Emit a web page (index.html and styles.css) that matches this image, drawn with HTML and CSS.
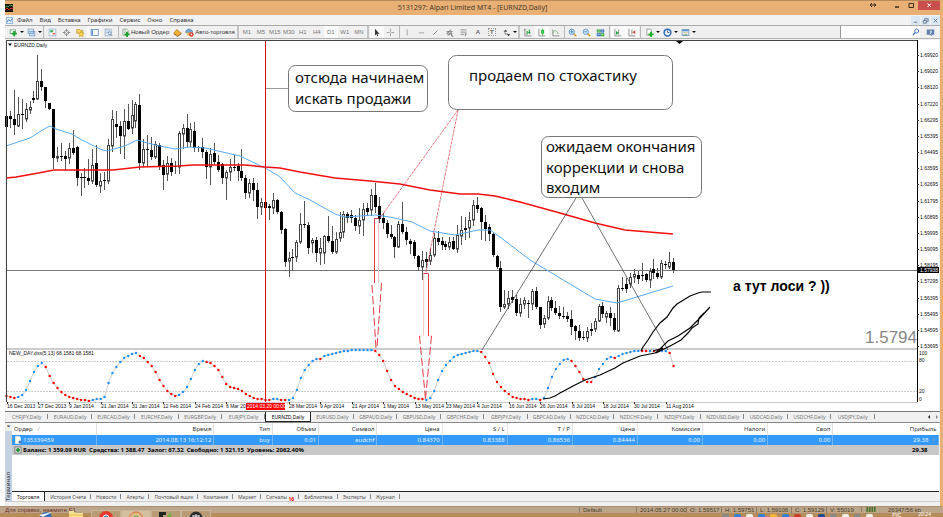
FILE: index.html
```html
<!DOCTYPE html>
<html lang="ru">
<head>
<meta charset="utf-8">
<title>5131297: Alpari Limited MT4 - [EURNZD,Daily]</title>
<link rel="stylesheet" href="styles.css">
</head>
<body>
<div class="window">
  <header class="titlebar">
    <svg class="app-icon" viewBox="0 0 8 8"><rect width="8" height="8" fill="#1c1608"/><path d="M0 3l2-1 1 1 2-2 3 1" stroke="#3fa43a" fill="none"/><path d="M0 6l2-2 2 2 2-2 2 1" stroke="#d8321c" fill="none"/></svg>
    <h1>5131297: Alpari Limited MT4 - [EURNZD,Daily]</h1>
    <div class="window-buttons">
      <button class="pin" aria-label="Переключить"><svg viewBox="0 0 8 8"><path d="M1 4h6M3 2L1 4l2 2M5 2.500l2 1.500-2 1.500" stroke="#3a2a18" fill="none"/></svg></button>
      <button aria-label="Свернуть"><svg viewBox="0 0 8 8"><path d="M2 6h4" stroke="#3a2a18" stroke-width="1.500"/></svg></button>
      <button aria-label="Развернуть"><svg viewBox="0 0 8 8"><path d="M2 2.500h4.500v4H2z" stroke="#3a2a18" fill="none"/></svg></button>
      <button class="close" aria-label="Закрыть"><svg viewBox="0 0 8 8"><path d="M2.500 2.500l3.500 3.500M6 2.500L2.500 6" stroke="#fff"/></svg></button>
    </div>
  </header>
  <nav class="menubar">
    <svg class="doc-icon" viewBox="0 0 8 8"><rect x=".5" y=".5" width="7" height="7" fill="#e4effa" stroke="#8db2d8"/><path d="M1 6l2-3 2 2 2-3" stroke="#3d78b8" fill="none"/></svg>
    <button>Файл</button><button>Вид</button><button>Вставка</button><button>Графики</button><button>Сервис</button><button>Окно</button><button>Справка</button>
    <div class="mdi">
      <button aria-label="Свернуть окно"><svg viewBox="0 0 8 8"><path d="M2 6h4" stroke="#5a7288"/></svg></button>
      <button aria-label="Восстановить окно"><svg viewBox="0 0 8 8"><path d="M3 4V2h4v3H5M1.500 4H5v3H1.500z" stroke="#5a7288" fill="none"/></svg></button>
      <button aria-label="Закрыть окно"><svg viewBox="0 0 8 8"><path d="M2 2l4 4M6 2L2 6" stroke="#5a7288"/></svg></button>
    </div>
  </nav>
  <div class="toolbar">
    <div class="group">
      <button class="drop" aria-label="Новый график"><svg viewBox="0 0 12 12"><rect x="1.500" y="2.500" width="7" height="5" fill="#fff" stroke="#679b71"/><path d="M7 4v7M3.500 7.500h7" stroke="#18a028" stroke-width="2.500"/></svg></button>
      <button class="drop" aria-label="Профили"><svg viewBox="0 0 12 12"><rect x="3.500" y="4.500" width="7" height="6" fill="#cfe0f2" stroke="#6c94c0"/><rect x="1.500" y="1.500" width="7" height="6" fill="#e6f0fa" stroke="#6c94c0"/><path d="M2 5h6" stroke="#7fa9d4" stroke-width="2"/></svg></button>
    </div>
    <div class="group lined">
      <button aria-label="Обзор рынка"><svg viewBox="0 0 12 12"><rect x="1.500" y="1.500" width="9" height="9" fill="#fff" stroke="#8aaed4"/><path d="M3 4h4M4 3v3" stroke="#28a040" stroke-width="2"/><path d="M6 7.500h3.500" stroke="#e25440" stroke-width="2"/></svg></button>
      <button aria-label="Окно данных"><svg viewBox="0 0 12 12"><circle cx="6" cy="6" r="3" fill="none" stroke="#888"/><path d="M6 1v4M6 7v4M1 6h4M7 6h4" stroke="#777"/></svg></button>
      <button aria-label="Навигатор"><svg viewBox="0 0 12 12"><path d="M1 2h4l1 1h3v4H1z" fill="#f3d36c" stroke="#c29a2c"/><path d="M7 4l1 2.500 3 .500-2 2 .500 2.500-2.500-1-2.500 1 .500-2.500-2-2 3-.500z" fill="#ffd84b" stroke="#b98a1e" stroke-width=".7"/></svg></button>
      <button class="on" aria-label="Терминал"><svg viewBox="0 0 12 12"><rect x="1.500" y="2" width="9.500" height="8" fill="#fff" stroke="#4c82bd"/><path d="M3 3v6" stroke="#5b93cf" stroke-width="2"/></svg></button>
      <button aria-label="Тестер"><svg viewBox="0 0 12 12"><rect x="1.500" y="1.500" width="8" height="9" fill="#edf3fa" stroke="#8ba5c2"/><path d="M3 4h5M3 6h3" stroke="#90b4d8"/><circle cx="7.500" cy="7" r="2" fill="#d8e8f6" stroke="#6c87a2"/><path d="M9 8.500l2 2" stroke="#7c7c7c"/></svg></button>
    </div>
    <div class="group lined wide">
      <button class="text"><svg viewBox="0 0 12 12"><path d="M2.500 1.500h5l2 2v6h-7z" fill="#fff" stroke="#77917c"/><path d="M4 4h3M4 6h2" stroke="#999"/><path d="M8 5v7M4.500 8.500h7" stroke="#18a028" stroke-width="2.500"/></svg>Новый Ордер</button>
      <button aria-label="Редактор"><svg viewBox="0 0 12 12"><path d="M1 7l4-5 6 5-5 3.500z" fill="#f2b33a" stroke="#b27c16"/><path d="M1 8l5 3 5-3" stroke="#8f6414" fill="none"/></svg></button>
      <button class="text"><svg viewBox="0 0 12 12"><path d="M1 6c0-6 9-6 9 0z" fill="#77a8d8" stroke="#48769f"/><path d="M2 6h8l-1 4H3z" fill="#f2c45d"/><circle cx="8.500" cy="8.500" r="3" fill="#db3b28"/><path d="M7.500 7.500h2v2h-2z" fill="#fff"/></svg>Авто-торговля</button>
    </div>
    <div class="group handle periods">
      <button>M1</button><button>M5</button><button>M15</button><button>M30</button><button>H1</button><button>H4</button><button class="on">D1</button><button>W1</button><button>MN</button>
    </div>
    <div class="group handle">
      <button class="on" aria-label="Курсор"><svg viewBox="0 0 12 12"><path d="M4 1v9l2-2 1.500 3 1-.500L7 7.500h3z" fill="#333"/></svg></button>
      <button aria-label="Перекрестие"><svg viewBox="0 0 12 12"><path d="M6 1v4M6 7v4M1 6h4M7 6h4" stroke="#888"/></svg></button>
    </div>
    <div class="group lined">
      <button aria-label="Вертикальная линия"><svg viewBox="0 0 12 12"><path d="M5.500 2v8" stroke="#888"/></svg></button>
      <button aria-label="Горизонтальная линия"><svg viewBox="0 0 12 12"><path d="M2.500 6.500h7" stroke="#888"/></svg></button>
      <button aria-label="Трендовая линия"><svg viewBox="0 0 12 12"><path d="M3 9l6-6" stroke="#777"/></svg></button>
      <button aria-label="Канал"><svg viewBox="0 0 12 12"><path d="M2 8l6-6M4 10l6-6M2 5h7M3 8h6M9 7v4h2" stroke="#555" fill="none"/></svg></button>
      <button aria-label="Фибоначчи"><svg viewBox="0 0 12 12"><path d="M2 2.500h8M2 5.500h8M2 8.500h5M8.500 7v4M8.500 8h2" stroke="#777" fill="none"/></svg></button>
      <button class="glyph">A</button>
      <button class="glyph"><span class="boxed">T</span></button>
      <button class="drop" aria-label="Стрелки"><svg viewBox="0 0 12 12"><path d="M2 5l3-3 2 3zM6 8h5l-2 3z" fill="#444"/><path d="M4 5v3h4" stroke="#666" fill="none"/></svg></button>
    </div>
    <div class="group handle">
      <button aria-label="Бары"><svg viewBox="0 0 12 12"><path d="M2.500 1v9.500H11M1 3l1.500-1.500L4 3" stroke="#777" fill="none"/><path d="M5.500 4v5M8.500 2v6M7 6h3" stroke="#22a035" stroke-width="1.500"/></svg></button>
      <button class="on" aria-label="Свечи"><svg viewBox="0 0 12 12"><path d="M2.500 1v9.500H11" stroke="#777" fill="none"/><path d="M7.500 1v9" stroke="#22a035"/><rect x="5.500" y="2.500" width="4" height="5" fill="#2cc445"/></svg></button>
      <button aria-label="Линия"><svg viewBox="0 0 12 12"><path d="M2.500 2v8.500H11" stroke="#777" fill="none"/><path d="M2 7c3-5 4-5 8 1" stroke="#4fae5f" fill="none"/></svg></button>
    </div>
    <div class="group lined">
      <button aria-label="Увеличить"><svg viewBox="0 0 12 12"><path d="M7.500 7.500l3.500 3.500" stroke="#d3a02c" stroke-width="2"/><circle cx="5" cy="5" r="3.500" fill="#d9ecfb" stroke="#3b7fc2"/><path d="M3 5h4M5 3v4" stroke="#2f6fb0"/></svg></button>
      <button aria-label="Уменьшить"><svg viewBox="0 0 12 12"><path d="M7.500 7.500l3.500 3.500" stroke="#d3a02c" stroke-width="2"/><circle cx="5" cy="5" r="3.500" fill="#d9ecfb" stroke="#3b7fc2"/><path d="M3 5h4" stroke="#2f6fb0"/></svg></button>
      <button aria-label="Мозаика"><svg viewBox="0 0 12 12"><path d="M1 2h5v4H1zM6 7h5v4H6z" fill="#2ba135"/><path d="M6 2h5v4H6zM1 7h5v4H1z" fill="#2767b8"/><path d="M2 4h3M7 4h3M2 9h3M7 9h3" stroke="#fff"/></svg></button>
    </div>
    <div class="group lined">
      <button class="on" aria-label="Автопрокрутка"><svg viewBox="0 0 12 12"><path d="M2.500 1v9.500H11M7.500 2v7" stroke="#777" fill="none"/><path d="M4 4l4 2.500L4 9z" fill="#24a83a"/></svg></button>
      <button class="on" aria-label="Сдвиг графика"><svg viewBox="0 0 12 12"><path d="M2.500 1v9.500H11M6.500 2v7" stroke="#777" fill="none"/><path d="M11 3v5L7 5.500z" fill="#c94f38"/></svg></button>
    </div>
    <div class="group lined">
      <button class="drop" aria-label="Индикаторы"><svg viewBox="0 0 12 12"><path d="M2.500 1.500h5l1 1v7h-6z" fill="#fff" stroke="#888"/><path d="M8 5v7M4.500 8.500h7" stroke="#18b028" stroke-width="2.500"/></svg></button>
      <button class="drop" aria-label="Периоды"><svg viewBox="0 0 12 12"><circle cx="6" cy="6" r="4.500" fill="#eaf4fd" stroke="#2e6db2" stroke-width="2"/><path d="M6 3v3h2.500" stroke="#345" fill="none"/></svg></button>
      <button class="drop" aria-label="Шаблоны"><svg viewBox="0 0 12 12"><rect x="1.500" y="2" width="9" height="8" fill="#fff" stroke="#5a86b5"/><path d="M2 3.500h8" stroke="#5a94cf" stroke-width="2"/><path d="M3 7l2-1 2 1 2-1" stroke="#b85" fill="none"/><path d="M3 9h6" stroke="#4a9f55"/></svg></button>
    </div>
    <div class="search">
      <input type="text" aria-label="Поиск">
      <svg viewBox="0 0 12 12"><circle cx="7" cy="4.500" r="3" fill="none" stroke="#4a7ad0" stroke-width="1.500"/><path d="M5 6.500L1.500 10.500" stroke="#4a7ad0" stroke-width="2"/></svg>
    </div>
    <button class="chat" aria-label="Сообщения"><svg viewBox="0 0 12 12"><path d="M1 2h10v7H7l2 2.500L5 9H1z" fill="#5f7fae"/><path d="M5 4h2v2H6v2" stroke="#fff" fill="none"/></svg></button>
  </div>

  <main class="chart">
    <svg id="chart" viewBox="5 39 935 372" role="img" aria-label="EURNZD,Daily">
      <rect x="6" y="40" width="933" height="371" fill="#fff"/>
      <g id="levels"></g>
      <path class="price-line" d="M7 270.500H917"/>
      <g id="candles"></g>
      <path class="ma-fast" d="M6 146L30 138 44 129 50 126 56 129 72 134 80 139 100 149 107 151 125 146 137 140 155 145 175 149 190 147 205 148 240 156 265 168 279 176 295 193 310 200 335 214 345 217 375 215 390 217 412 222 430 231 455 235 478 230 490 230 500 237 530 260 560 278 595 299 617 303 640 296 673 286"/>
      <path class="ma-slow" d="M6 178L16 177 33 174 54 170 113 170 140 167 178 166 193 165 245 165 265 167 280 168 300 172 335 178 370 181 400 184 430 190 460 194 478 194 495 196 520 202 560 213 595 223 625 230 673 234"/>
      <path class="split" d="M6 349H918"/>
      <g id="stochastic"></g>
      <path class="cursor-line" d="M265.500 41V402"/>

      <g class="callouts">
        <path class="stem" d="M266 88.500H288"/>
        <rect x="288.500" y="65.500" width="139" height="46" rx="7"/>
        <rect x="448.500" y="55.500" width="224" height="54" rx="8"/>
        <rect x="541.500" y="136.500" width="160" height="61" rx="7"/>
      </g>
      <g class="note">
        <text x="295" y="83">отсюда начинаем</text><text x="295" y="104">искать продажи</text>
        <text x="469" y="81">продаем по стохастику</text>
        <text x="546" y="152">ожидаем окончания</text><text x="546" y="173">коррекции и снова</text><text x="546" y="193">входим</text>
      </g>
      <g class="sell-marks">
        <path class="thin" d="M458 110L380 218M458 110L426 272"/>
        <path d="M374.500 283V218.500H378.500M428.500 336V273.500H423.500"/>
        <path class="faint" d="M378.500 219V283M423.500 274V336M419 336h3M429 336h3"/>
        <path class="dashes" d="M372 285L376 348M381.500 283L377 348M419.500 336L425.500 399M431.500 336L425.500 399"/>
      </g>
      <path class="pointer" d="M576 198L482 350M582 198L668 350"/>
      <path class="scribble" d="M641 351L643 347 648 340 653 332 660 323 667 317 673 308 677 304 690 296 698 293 702 292 711 292M653 351L660 349 668 341 678 336 690 328 698 320 710 307M656 353L664 349 672 345 681 340 688 333 692 328 698 324 699 318 704 313M543 399L550 398 555 396 560 393 575 385 585 380 600 375 615 368 623 363 640 356 655 353 663 348"/>
      <text class="remark" x="733" y="291">а тут лоси ? ))</text>
      <text class="quote" x="865" y="343">1.5794</text>

      <path class="frame" d="M6 40.500H918M6.500 40V402"/>
      <path class="axis" d="M917.500 40V402"/>
      <path class="base" d="M7 402.500H917"/>
      <path d="M676 41h7l-3.500 3z"/>
      <path d="M8 43.500h4l-2 2.500z"/>
      <g class="small"><text x="14" y="47">EURNZD,Daily</text><text x="9" y="355">NEW_DAY.dss(5,13) 68.1581 68.1581</text></g>
      <g class="small" id="axes"></g>
      <rect x="918" y="267" width="21" height="6"/>
      <rect class="date-tag" x="246" y="403" width="39" height="7"/>
      <g class="small tag"><text x="920" y="272">1.57938</text><text x="247" y="408">2014.03.20 00:00</text></g>
    </svg>
  </main>

  <nav class="chart-tabs">
    <div class="tab-list">
      <button>CHFJPY,Daily</button><button>EURAUD,Daily</button><button>EURCAD,Daily</button><button>EURCHF,Daily</button><button>EURGBP,Daily</button><button>EURJPY,Daily</button><button class="active">EURNZD,Daily</button><button>EURUSD,Daily</button><button>GBPAUD,Daily</button><button>GBPUSD,Daily</button><button>GBPCHF,Daily</button><button>GBPJPY,Daily</button><button>GBPCAD,Daily</button><button>NZDCAD,Daily</button><button>NZDCHF,Daily</button><button>NZDJPY,Daily</button><button>NZDUSD,Daily</button><button>USDCAD,Daily</button><button>USDCHF,Daily</button><button>USDJPY,Daily</button>
    </div>
    <svg class="scroll" viewBox="0 0 12 6"><path d="M3 1v4L1 3z" fill="#222"/><path d="M9 1v4l2-2z" fill="#888"/></svg>
  </nav>

  <section class="terminal">
    <div class="side"><button aria-label="Закрыть терминал">×</button><span>Терминал</span></div>
    <div class="panel">
      <table>
        <colgroup><col class="c-order"><col class="c-time"><col class="c-type"><col class="c-vol"><col class="c-sym"><col class="c-num"><col class="c-num"><col class="c-num"><col class="c-num"><col class="c-num"><col class="c-num"><col class="c-num"><col class="c-profit"></colgroup>
        <thead><tr><th>Ордер &nbsp; <i>/</i></th><th>Время</th><th>Тип</th><th>Объем</th><th>Символ</th><th>Цена</th><th>S / L</th><th>T / P</th><th>Цена</th><th>Комиссия</th><th>Налоги</th><th>Своп</th><th>Прибыль</th></tr></thead>
        <tbody>
          <tr class="order"><td><svg viewBox="0 0 8 8"><path d="M1.500.500h4l1 1.500v5.500h-5z" fill="#fff" stroke="#d6e4f0"/><circle cx="6" cy="6" r="1.500" fill="#4577a8"/></svg>135339459</td><td>2014.08.13 16:12:12</td><td>buy</td><td>0.01</td><td>audchf</td><td>0.84370</td><td>0.83388</td><td>0.86536</td><td>0.84444</td><td>0.00</td><td>0.00</td><td>0.00</td><td>29.38 &nbsp;<i>×</i></td></tr>
          <tr class="balance"><td colspan="12"><svg viewBox="0 0 8 8"><rect x="1" y="1" width="6" height="6" fill="#fff" stroke="#777"/><circle cx="4" cy="4" r="2" fill="#259035"/></svg>Баланс: 1 359.09 RUR&nbsp; Средства: 1 388.47&nbsp; Залог: 67.32&nbsp; Свободно: 1 321.15&nbsp; Уровень: 2062.40%</td><td>29.38</td></tr>
        </tbody>
      </table>
      <nav class="term-tabs">
        <button class="active">Торговля</button><button>История Счета</button><button>Новости</button><button>Алерты</button><button>Почтовый ящик</button><button>Компания</button><button>Маркет</button><button>Сигналы <sub>16</sub></button><button>Библиотека</button><button>Эксперты</button><button>Журнал</button>
      </nav>
    </div>
  </section>

  <div class="status">
    <span class="help">Для справки, нажмите F1</span>
    <span class="profile">Default</span><span class="date">2014.05.27 00:00</span><span>O: 1.59517</span><span>H: 1.59751</span><span>L: 1.59106</span><span>C: 1.59129</span><span>V: 55019</span>
    <span class="net"><svg viewBox="0 0 12 6"><path d="M1.500 0v6M4.500 0v6M7.500 0v6M10.500 0v6" stroke="#49702a" stroke-width="2"/></svg></span><span class="traffic">26347/56 kb</span>
  </div>
</div>

<footer class="taskbar">
  <button aria-label="Калькулятор"><svg viewBox="0 0 16 12"><path d="M2 1h5v5H2zM8 1h5v5H8zM2 7h11v5H2z" fill="#f5f1e8"/></svg></button>
  <button aria-label="Обозреватель"><svg viewBox="0 0 16 12"><circle cx="8" cy="8" r="6" fill="#2c70b8"/><path d="M1 5l13-3-9 5z" fill="#eef4fa"/></svg></button>
  <button aria-label="Проводник"><svg viewBox="0 0 16 12"><path d="M1 1h5l1 2h8v9H1z" fill="#f6df8e"/><path d="M1 5h14" stroke="#e2bd58"/></svg></button>
  <button class="open" aria-label="Chrome"><svg viewBox="0 0 16 12"><circle cx="8" cy="7" r="7" fill="#e33b2e"/><path d="M1 7a7 7 0 0 0 5 5l1-4z" fill="#2fa34c"/><path d="M15 7a7 7 0 0 1-5 5V6z" fill="#f5cf37"/><circle cx="8" cy="7" r="3" fill="#3e7fd8" stroke="#fff"/></svg></button>
  <button class="open light" aria-label="Alpari"><svg viewBox="0 0 16 12"><g fill="none"><path d="M1 8a7 7 0 0 1 14 0" stroke="#e2683c"/><path d="M3 8a5 5 0 0 1 10 0" stroke="#e8bd46"/><path d="M5 8a3 3 0 0 1 6 0" stroke="#6aa45d"/></g></svg></button>
  <button class="open" aria-label="Терминал FX"><svg viewBox="0 0 16 12"><path d="M1 1h7v3H5v2h3v3H5v3H1z" fill="#1f2620"/><path d="M14 0L8 7l3 1-2 4 6-6-3-1z" fill="#57b536"/></svg></button>
  <button class="open" aria-label="Приложение"><svg viewBox="0 0 16 12"><circle cx="8" cy="7" r="6.500" fill="#2b2b2b"/><path d="M5 4v8M11 4v8M5 5h6M8 3v9" stroke="#eee" fill="none"/></svg></button>
  <div class="tray">
    <i class="grey"></i><i class="blue"></i><i class="white"></i><i class="blue"></i><i class="gold"></i><i class="blue"></i><i class="red"></i><i class="white"></i><i class="navy"></i><i class="grey"></i><i class="white"></i><i class="grey"></i><i class="white"></i>
    <span>РУС</span>
  </div>
  <time>20:24</time>
</footer>
<script src="chart.js"></script>
</body>
</html>
```
FILE: styles.css
```css
* { box-sizing: border-box; }
body {
  margin: 0;
  height: 100vh;
  overflow: hidden;
  display: flex;
  flex-direction: column;
  background: #b58c5a;
  font: 6px/8px "Noto Sans", sans-serif;
  color: #333;
}
button {
  border: 0;
  padding: 0;
  margin: 0;
  background: none;
  font: inherit;
  color: inherit;
  white-space: nowrap;
}
svg { display: block; }

.window {
  flex: 1;
  min-height: 0;
  display: flex;
  flex-direction: column;
  border-left: 5px solid #fff;
  border-right: 3px solid #e8b075;
  background: #f0f0f0;
}

/* title and menu */
.titlebar {
  height: 15px;
  flex: none;
  display: grid;
  grid-template-columns: 1fr auto 1fr;
  border-top: 1px solid #b98a5a;
  background: #e8b075;
}
.app-icon { width: 8px; height: 8px; margin-top: 3px; }
.titlebar h1 { margin: 0; font-size: 7px; font-weight: 400; line-height: 14px; color: #4b3a28; }
.window-buttons { display: flex; justify-content: flex-end; }
.window-buttons button { width: 14px; height: 9px; display: flex; justify-content: center; }
.window-buttons svg { width: 8px; height: 8px; }
.window-buttons .pin { margin-right: 10px; }
.window-buttons .close { width: 22px; background: #c9504f; }
.menubar { height: 10px; flex: none; display: flex; align-items: center; gap: 7px; background: #f2f2f2; }
.doc-icon { width: 7px; height: 7px; margin: 0 -3px 0 1px; }
.mdi { margin-left: auto; display: flex; gap: 1px; }
.mdi button { width: 9px; height: 9px; background: #dbe8f4; }
.mdi svg { width: 7px; height: 7px; margin: auto; }

/* toolbar */
.toolbar {
  height: 14px;
  flex: none;
  display: flex;
  align-items: stretch;
  border-top: 1px solid #aaa;
  border-bottom: 1px solid #b4b4b4;
  background: #f0f0f0;
  font-family: "Liberation Sans", sans-serif;
}
.group { display: flex; padding: 0 1px; }
.group button { width: 14px; display: flex; align-items: center; justify-content: center; }
.group svg { width: 9px; height: 9px; flex: none; }
.lined { border-left: 1px solid #b8b8b8; }
.handle { border-left: 2px solid #c4c4c4; }
.group .on { background: #fafafa; }
.group .drop { width: 18px; justify-content: flex-start; padding-left: 3px; gap: 2px; }
.drop::after { content: ""; border: 2px solid transparent; border-top-color: #111; border-bottom: 0; }
.wide { margin-left: 2px; }
.group .text { width: auto; gap: 1px; padding: 0 1px; }
.periods { color: #777; }
.glyph { font-weight: 700; color: #666; }
.boxed { border: 1px dotted #999; line-height: 6px; padding: 0 1px; }
.search { margin-left: auto; width: 80px; display: flex; align-items: center; background: #fff; border-left: 1px solid #999; }
.search input { flex: 1; min-width: 0; height: 10px; padding: 0 2px; border: 0; background: none; font: inherit; outline: 0; }
.search svg { width: 8px; height: 8px; }
.chat { width: 20px; }
.chat svg { width: 9px; height: 9px; margin: 0 6px; }

/* chart */
.chart { flex: none; }
.chart svg { width: 100%; height: auto; }
.frame, .axis { fill: none; stroke: #444; }
.axis { stroke: #000; }
.base, .levels-line { stroke: #ccc; fill: none; }
.levels-line { stroke-dasharray: 2 1; }
.split { stroke: #ccc; stroke-width: 2; }
.price-line { stroke: #777; }
.wick { stroke: #555; }
.up { fill: #fff; stroke: #444; }
.ma-fast { fill: none; stroke: #5aaaf5; }
.ma-slow { fill: none; stroke: #f01010; stroke-width: 1.5; }
.cursor-line { stroke: #e01010; }
.stoch { fill: none; stroke: #ccc; }
.dot-up { fill: #1e90ff; }
.dot-down { fill: #f00; }
.callouts rect { fill: #fff; stroke: #777; }
.stem { stroke: #999; }
.note { font: 15px "Noto Sans", sans-serif; fill: #111; }
.sell-marks { fill: none; stroke: #e23a44; }
.sell-marks .thin { stroke-width: .7; stroke-dasharray: 3 1; }
.sell-marks .faint { stroke: #fbc8c8; }
.dashes { stroke-dasharray: 8 3; }
.pointer { stroke: #333; stroke-width: .7; }
.scribble { fill: none; stroke: #000; stroke-width: 1.2; }
.remark { font: bold 14px "Liberation Sans", sans-serif; }
.quote { font: 17px "Liberation Sans", sans-serif; fill: #888; }
.small { font: 5px "Liberation Sans", sans-serif; fill: #111; }
.tag { fill: #fff; }
.date-tag { fill: #f00; }
.tick { stroke: #333; }

/* chart tabs */
.chart-tabs { height: 11px; flex: none; display: flex; justify-content: space-between; border-top: 1px solid #777; color: #777; font-size: 5px; }
.tab-list { width: 93%; display: flex; }
.tab-list button { position: relative; flex: 1; }
.tab-list button::after, .term-tabs button::after {
  content: "";
  position: absolute;
  right: 0;
  top: 2px;
  height: 5px;
  border-right: 1px solid #888;
}
.tab-list .active { background: #fff; color: #000; border: solid #222; border-width: 0 1px 1px; }
.tab-list .active::after, .term-tabs .active::after { display: none; }
.scroll { width: 12px; height: 6px; margin: 2px 1px 0 0; }

/* terminal */
.terminal { height: 80px; flex: none; display: flex; border-top: 1px solid #888; border-bottom: 1px solid #ccc; }
.side { width: 7px; display: flex; flex-direction: column; justify-content: space-between; align-items: center; background: linear-gradient(#f0f0f0 8px, #c5d2e0 8px); }
.side button { line-height: 6px; font-weight: 700; }
.side span { writing-mode: vertical-rl; transform: rotate(180deg); line-height: 7px; }
.panel { flex: 1; min-width: 0; display: flex; flex-direction: column; justify-content: space-between; background: #fff; margin-right: 1px; }
table { width: 100%; table-layout: fixed; border-collapse: collapse; }
.c-order { width: 9.1%; } .c-time { width: 12.7%; } .c-type { width: 6.3%; } .c-vol { width: 5%; } .c-sym { width: 6.3%; } .c-num { width: 7.03%; }
th, td { height: 10px; padding: 0 2px; text-align: right; font-weight: 400; white-space: nowrap; border-right: 1px solid #e4e4e4; line-height: 8px; }
th { height: 12px; color: #333; }
th:first-child, td:first-child { text-align: left; }
th:last-child { border: 0; }
th i, td i { font-style: normal; color: #999; }
td svg { display: inline-block; width: 8px; height: 8px; vertical-align: top; margin-right: 1px; }
.order { background: #3399fb; color: #e5f2ff; }
.order td { border-color: #71b6fa; }
.balance { background: #c8c8c8; color: #000; }
.balance td { font-weight: 700; border: 0; }
.order td:last-child { padding-right: 3px; }
.balance td:last-child { padding-right: 11px; }
.term-tabs { height: 10px; display: flex; border-top: 1px solid #222; background: #f0f0f0; color: #555; font-size: 5px; }
.term-tabs button { position: relative; padding: 0 5px; }
.term-tabs .active { background: #fff; color: #222; border-right: 1px solid #222; }
.term-tabs sub { color: #e00; line-height: 0; font-size: 5px; font-weight: 700; }

/* status line */
.status {
  flex: 1;
  margin: 4px -3px 0 -5px;
  padding-left: 5px;
  display: flex;
  align-items: flex-start;
  background: #bba68b;
  border-top: 1px solid #a89070;
  color: #4c3c2a;
  font: 6px/6px "Liberation Sans", sans-serif;
}
.status span { flex: none; width: 35px; padding-left: 3px; border-left: 1px solid #8f7b62; white-space: nowrap; }
.status .help { flex: 1; border: 0; padding: 0; color: #70302a; }
.status .profile { width: 57px; }
.status .date { width: 50px; }
.status .net { width: 24px; }
.status .net svg { width: 12px; height: 5px; }
.status .traffic { width: 58px; border: 0; }

/* taskbar */
.taskbar { height: 4px; flex: none; display: flex; align-items: flex-start; background: #b58c5a; padding-left: 1px; font-size: 5px; line-height: 6px; }
.taskbar button { position: relative; width: 30px; height: 7px; margin-top: -3px; overflow: hidden; }
.taskbar button:first-child { z-index: -1; }
.taskbar svg { width: 16px; height: 12px; margin: 0 auto; }
.open { background: #b99c76; border: 1px solid #c9b496; border-bottom: 0; }
.taskbar .light { background: #d2bf9e; }
.tray { margin-left: auto; display: flex; gap: 5px; color: #fff; }
.tray i { width: 7px; height: 7px; border-radius: 2px; background: #888; margin-top: 1px; }
.tray .blue { background: #2f83d2; }
.tray .white { background: #eee; }
.tray .gold { background: #f2b33a; }
.tray .red { background: #c9402e; }
.tray .navy { background: #1f4c88; }
.tray span { margin: -1px 0 0 14px; }
time { position: relative; color: #fff; margin: -2px 12px 0 17px; }
```
FILE: chart.js
```js
// Each candle: high, body top, body bottom, low, in chart units; a trailing "u" marks a rising (hollow) one.
const candles = `105 116 127 129|111 116 119 127|90 119 125 134|97 114 126 126u|99 114 115 128|103 109 119 121u|101 107 110 113u|91 98 100 102|55 81 99 99u|69 81 87 90|87 87 101 107|103 103 109 109|109 109 158 168|147 156 158 161u|143 156 157 160|151 156 159 170|143 148 158 163u|130 148 153 154|146 147 178 185|173 177 178 195|168 177 178 187|159 178 181 184|149 165 181 183u|145 163 185 186|173 181 186 192u|172 180 181 189|139 145 181 183u|110 119 146 151u|111 124 127 137|121 126 136 153|109 121 136 158u|104 121 129 129|100 115 128 133u|102 104 121 127u|94 105 163 169|139 149 163 166u|135 149 150 165|137 150 157 159|141 144 157 158u|143 145 166 169|160 165 175 189|156 163 174 180u|158 163 172 175|161 166 167 173|131 133 167 173u|124 128 134 148u|114 128 142 147|123 129 142 146u|122 131 148 151|146 147 148 151|138 147 152 157|150 152 167 178|148 154 167 184u|143 153 162 163|155 162 170 171|163 164 178 183|170 172 178 199u|159 167 172 180u|155 167 168 170|163 166 171 180|149 171 178 180|175 178 193 198|179 183 193 197u|178 183 190 200|183 190 207 218|198 202 207 214u|199 202 208 210|204 206 208 219|193 200 208 213u|199 200 212 213|211 212 230 233|228 229 262 266|252 258 261 276u|249 257 258 270|240 242 257 261u|213 224 242 243u|201 224 225 227|222 225 248 253|238 240 243 252u|237 240 253 261|238 248 253 264u|235 236 253 263u|216 236 241 242|226 241 252 253|232 239 252 253u|212 232 238 241u|211 214 232 237u|212 214 218 222|210 215 218 222|215 218 226 230|208 220 226 233u|203 209 220 235u|203 208 212 215|189 195 210 215u|183 195 207 212|197 206 219 222|213 218 223 228|220 223 234 237|225 234 237 238|236 237 247 257|221 224 247 247u|202 224 232 233|227 232 240 244|239 241 244 253|240 242 256 258|255 256 267 270|251 260 267 279u|252 259 262 267|248 255 261 264u|233 238 255 256u|231 238 242 244|237 241 245 249|241 244 247 249|237 242 247 249u|237 241 249 249|225 235 249 252u|216 230 236 244u|217 228 230 239|212 220 228 237u|200 205 220 225u|197 205 209 212|207 208 222 239|215 222 229 240|224 227 234 240|233 234 255 256|255 256 267 268|261 268 307 311|290 304 307 308u|291 298 304 308u|290 297 300 302|295 299 313 315|298 304 313 316u|297 300 304 308u|300 303 304 317|289 291 304 309u|287 291 307 308|307 307 325 328|315 318 324 327u|296 301 318 319u|297 300 308 310|301 308 313 314|306 313 316 318|307 316 317 318|312 316 319 321|310 319 327 334|325 326 331 339|325 331 338 340|331 337 338 339|327 331 338 341u|323 329 331 335|318 321 329 331u|304 306 321 321u|302 306 314 317|311 313 317 322u|307 313 318 325|313 318 330 331|285 288 331 331u|277 288 289 290|278 284 289 292|273 277 284 287u|269 274 277 282u|271 275 279 283|263 275 276 280|273 274 280 281|268 271 280 287u|259 269 273 278|268 273 277 278|260 263 277 278u|261 264 265 268|252 262 267 268u|258 262 270 272`.split("|");

const oscillator = [396,397,398,397,395,390,381,372,366,363,367,376,383,388,392,395,397,398,399,400,400,401,400,399,399,397,383,373,367,362,358,356,354,353,356,358,362,366,372,380,386,391,394,396,395,392,387,379,370,364,361,362,363,366,370,377,384,387,388,389,391,394,396,398,399,399,400,400,399,399,400,400,400,398,390,378,370,365,361,359,359,356,355,354,353,352,351,351,350,350,350,350,350,350,351,355,361,371,380,386,389,392,394,396,398,399,399,400,398,391,380,371,365,361,357,355,354,353,352,351,351,352,357,363,374,382,387,391,394,397,398,399,399,400,399,399,400,398,388,377,369,364,360,359,361,366,372,379,382,382,377,369,364,359,357,358,356,354,353,352,351,351,351,351,351,351,351,351,351,353,366];
// Inclusive index ranges where the oscillator is falling.
const falling = [[0,2],[10,21],[34,43],[51,67],[70,71],[80,80],[94,106],[121,133],[136,136],[144,149],[155,155],[162,163],[165,166],[169,170]];

const NS = "http://www.w3.org/2000/svg";
const xAt = i => 6.5 + i * 3.924;
function add(parent, tag, attrs, text) {
  const el = document.createElementNS(NS, tag);
  for (const key in attrs) el.setAttribute(key, attrs[key]);
  if (text) el.textContent = text;
  document.getElementById(parent).appendChild(el);
}

candles.forEach((row, i) => {
  const up = row.endsWith("u");
  const [high, top, bottom, low] = row.replace("u", "").split(" ").map(Number);
  const x = Math.round(xAt(i) - 0.5);
  add("candles", "path", { class: "wick", d: `M${x + 0.5} ${high}V${low + 1}` });
  if (up) add("candles", "rect", { class: "up", x: x - 0.5, y: top + 0.5, width: 2, height: Math.max(bottom - top - 0.5, 1) });
  else add("candles", "rect", { x: x - 1, y: top, width: 3, height: bottom - top });
});

for (const y of [361.5, 391.5]) add("levels", "path", { class: "levels-line", d: `M7 ${y}H917` });
add("stochastic", "path", { class: "stoch", d: "M" + oscillator.map((y, i) => `${xAt(i)} ${y}`).join("L") });
oscillator.forEach((y, i) => {
  const down = falling.some(([from, to]) => i >= from && i <= to);
  add("stochastic", "circle", { class: down ? "dot-down" : "dot-up", cx: xAt(i), cy: y, r: 1.2 });
});

const prices = ["1.69920","1.69020","1.68120","1.67220","1.66295","1.65395","1.64495","1.63595","1.62695","1.61795","1.60895","1.59995","1.59095","1.58195","1.57295","1.56395","1.55495","1.54595","1.53695"];
prices.forEach((label, i) => {
  const y = Math.round(55 + i * 16.17);
  add("axes", "path", { class: "tick", d: `M917 ${y + 0.5}h2` });
  add("axes", "text", { x: 920, y: y + 2 }, label);
});
[["100", 355], ["80", 362], ["20", 393], ["0", 401]].forEach(([label, y]) => add("axes", "text", { x: 919, y }, label));

const dates = ["16 Dec 2013","27 Dec 2013","9 Jan 2014","21 Jan 2014","31 Jan 2014","12 Feb 2014","24 Feb 2014","6 Mar 20","","28 Mar 2014","9 Apr 2014","21 Apr 2014","1 May 2014","13 May 2014","23 May 2014","4 Jun 2014","16 Jun 2014","26 Jun 2014","8 Jul 2014","18 Jul 2014","30 Jul 2014","11 Aug 2014"];
dates.forEach((label, i) => {
  const x = Math.round(xAt(i * 8));
  if (label) add("axes", "path", { class: "tick", d: `M${x + 0.5} 402v2` });
  add("axes", "text", { x, y: 408 }, label);
});
```
